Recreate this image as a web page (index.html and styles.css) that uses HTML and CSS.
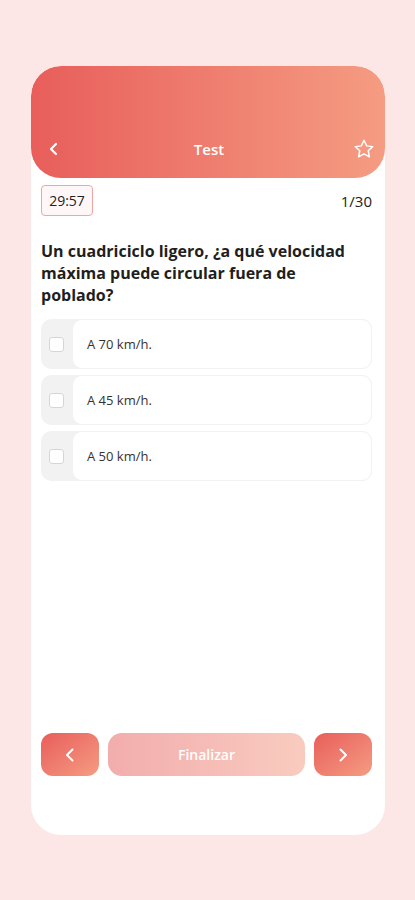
FILE: index.html
```html
<!DOCTYPE html>
<html lang="es">
<head>
    <meta charset="UTF-8">
    <meta name="viewport" content="width=device-width, initial-scale=1.0">
    <title>Test</title>
    <link rel="stylesheet" href="styles.css">
</head>
<body>
    <div class="screen">
        <div class="header">
            <div class="header-bar">
                <button class="icon-btn" aria-label="Volver">
                    <svg width="14" height="14" viewBox="0 0 14 14"><path d="M9 2 L4 7 L9 12" fill="none" stroke="#fff" stroke-width="2.2" stroke-linecap="round" stroke-linejoin="round"/></svg>
                </button>
                <h1>Test</h1>
                <button class="icon-btn" aria-label="Favorito">
                    <svg width="22" height="22" viewBox="0 0 24 24"><path d="M12 2.5 L14.9 8.6 L21.5 9.4 L16.6 13.9 L17.9 20.5 L12 17.2 L6.1 20.5 L7.4 13.9 L2.5 9.4 L9.1 8.6 Z" fill="none" stroke="#fff" stroke-width="1.6" stroke-linejoin="round"/></svg>
                </button>
            </div>
        </div>

        <div class="content">
            <div class="status-row">
                <div class="timer">29:57</div>
                <div class="counter">1/30</div>
            </div>

            <p class="question">Un cuadriciclo ligero, ¿a qué velocidad máxima puede circular fuera de poblado?</p>

            <div class="options">
                <label class="option">
                    <span class="check"><span class="box"></span></span>
                    <span class="answer">A 70 km/h.</span>
                </label>
                <label class="option">
                    <span class="check"><span class="box"></span></span>
                    <span class="answer">A 45 km/h.</span>
                </label>
                <label class="option">
                    <span class="check"><span class="box"></span></span>
                    <span class="answer">A 50 km/h.</span>
                </label>
            </div>

            <div class="nav">
                <button class="nav-btn" aria-label="Anterior">
                    <svg width="16" height="16" viewBox="0 0 16 16"><path d="M10.5 2.5 L5 8 L10.5 13.5" fill="none" stroke="#fff" stroke-width="2" stroke-linecap="round" stroke-linejoin="round"/></svg>
                </button>
                <button class="finish-btn">Finalizar</button>
                <button class="nav-btn" aria-label="Siguiente">
                    <svg width="16" height="16" viewBox="0 0 16 16"><path d="M5.5 2.5 L11 8 L5.5 13.5" fill="none" stroke="#fff" stroke-width="2" stroke-linecap="round" stroke-linejoin="round"/></svg>
                </button>
            </div>
        </div>
    </div>
</body>
</html>
```

FILE: styles.css
```css
body {
    margin: 0;
    font-family: "Open Sans", "Noto Sans", sans-serif;
    background-color: #fde7e6;
}
.screen {
    width: 354px;
    height: 769px;
    margin: 66px 0 0 31px;
    background-color: #fff;
    border-radius: 30px;
    display: flex;
    flex-direction: column;
    overflow: hidden;
}
.header {
    height: 112px;
    border-radius: 30px;
    background: linear-gradient(to right, #e85e5b, #f59c82);
    display: flex;
    align-items: flex-end;
    box-sizing: border-box;
    padding: 0 10px 18px 12px;
}
.header-bar {
    flex: 1;
    display: flex;
    align-items: center;
    justify-content: space-between;
}
.header-bar h1 {
    margin: 0;
    color: #fff;
    font-size: 15px;
    font-weight: 600;
}
.icon-btn {
    background: none;
    border: none;
    padding: 0;
    width: 22px;
    height: 22px;
    display: flex;
    align-items: center;
    justify-content: center;
}
.content {
    flex: 1;
    display: flex;
    flex-direction: column;
    padding: 7px 13px 59px 10px;
}
.status-row {
    display: flex;
    justify-content: space-between;
    align-items: center;
}
.timer {
    box-sizing: border-box;
    width: 52px;
    height: 31px;
    line-height: 29px;
    text-align: center;
    border: 1px solid #f0a5a5;
    border-radius: 4px;
    background-color: #fff7f7;
    font-size: 14px;
    color: #222;
}
.counter {
    font-size: 15px;
    color: #222;
}
.question {
    max-width: 310px;
    margin: 24px 0 13px;
    font-size: 16px;
    font-weight: 700;
    line-height: 22px;
    color: #1f1f1f;
}
.options {
    display: flex;
    flex-direction: column;
    gap: 6px;
}
.option {
    display: flex;
    height: 50px;
    background-color: #f2f2f2;
    border-radius: 10px;
}
.check {
    padding-left: 8px;
    display: flex;
    align-items: center;
}
.box {
    box-sizing: border-box;
    width: 15px;
    height: 15px;
    border: 1.5px solid #d6d6d6;
    border-radius: 3px;
    background-color: #fff;
}
.answer {
    flex: 1;
    margin-left: 8px;
    display: flex;
    align-items: center;
    padding-left: 14px;
    background-color: #fff;
    border: 1px solid #f2f2f2;
    border-radius: 10px;
    font-size: 13px;
    color: #333;
}
.nav {
    margin-top: auto;
    display: flex;
    gap: 9px;
}
.nav-btn {
    width: 58px;
    height: 43px;
    border: none;
    border-radius: 12px;
    background: linear-gradient(to bottom right, #e85e5b, #f59c82);
    display: flex;
    align-items: center;
    justify-content: center;
}
.finish-btn {
    flex: 1;
    height: 43px;
    border: none;
    border-radius: 14px;
    background: linear-gradient(to right, #f2adad, #f9cbbf);
    color: #fff;
    font-family: inherit;
    font-size: 14px;
    font-weight: 600;
}
```
